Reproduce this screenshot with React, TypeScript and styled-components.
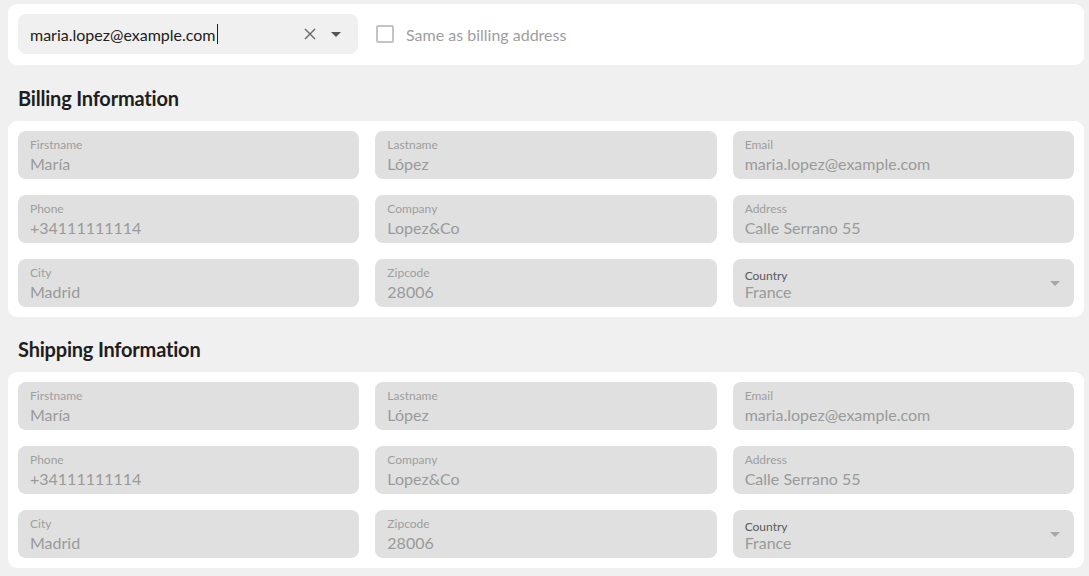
import styled, { createGlobalStyle } from 'styled-components';

const GlobalStyle = createGlobalStyle`
    body {
        margin: 0;
        background: #f0f0f0;
        font-family: Lato, "Open Sans", sans-serif;
    }
`;

const Page = styled.div`
    padding: 4px 5px 8px 8px;
`;

const Card = styled.div<{ $compact?: boolean }>`
    background: #fff;
    border-radius: 9px;
    padding: ${(p) => (p.$compact ? '10px 10px 11px' : '10px')};
`;

const TopRow = styled.div`
    display: flex;
    align-items: center;
    gap: 18px;
`;

const Combo = styled.div`
    width: 340px;
    height: 40px;
    box-sizing: border-box;
    background: #f0f0f0;
    border-radius: 8px;
    display: flex;
    align-items: center;
    padding: 0 14px 0 12px;
`;

const ComboText = styled.span`
    flex: 1;
    font-size: 16px;
    color: #212121;
    display: flex;
    align-items: center;
`;

const Caret = styled.span`
    display: inline-block;
    width: 1px;
    height: 20px;
    background: #212121;
    margin-left: 1px;
`;

const IconBtn = styled.span`
    display: flex;
    align-items: center;
    justify-content: center;
    width: 16px;
    height: 16px;
    margin-left: 10px;
`;

const CheckLabel = styled.label`
    display: flex;
    align-items: center;
    gap: 12px;
    font-size: 16px;
    color: #9e9e9e;
`;

const Box = styled.span`
    width: 18px;
    height: 18px;
    box-sizing: border-box;
    border: 2px solid #c4c4c4;
    border-radius: 2px;
`;

const Heading = styled.h2<{ $tight?: boolean }>`
    margin: ${(p) => (p.$tight ? '16px' : '17px')} 0 7px 10px;
    font-size: 20px;
    line-height: 32px;
    font-weight: 700;
    color: #1e1e1e;
    letter-spacing: -0.2px;
`;

const Grid = styled.div`
    display: grid;
    grid-template-columns: repeat(3, 1fr);
    gap: 16px;
`;

const Field = styled.div<{ $select?: boolean }>`
    position: relative;
    height: 48px;
    box-sizing: border-box;
    background: #e0e0e0;
    border-radius: 8px;
    padding: ${(p) => (p.$select ? '10px 12px 0' : '6px 12px 0')};
`;

const Label = styled.div<{ $dark?: boolean }>`
    font-size: 12px;
    line-height: ${(p) => (p.$dark ? '13px' : '16px')};
    color: ${(p) => (p.$dark ? '#5a5a5a' : '#9e9e9e')};
`;

const Value = styled.div<{ $select?: boolean }>`
    font-size: 16px;
    line-height: ${(p) => (p.$select ? '20px' : '22px')};
    color: #9a9a9a;
`;

const SelectArrow = styled.span`
    position: absolute;
    right: 14px;
    top: 22px;
    width: 0;
    height: 0;
    border-left: 5px solid transparent;
    border-right: 5px solid transparent;
    border-top: 5px solid #a6a6a6;
`;

const fields = [
    { label: 'Firstname', value: 'María' },
    { label: 'Lastname', value: 'López' },
    { label: 'Email', value: 'maria.lopez@example.com' },
    { label: 'Phone', value: '+34111111114' },
    { label: 'Company', value: 'Lopez&Co' },
    { label: 'Address', value: 'Calle Serrano 55' },
    { label: 'City', value: 'Madrid' },
    { label: 'Zipcode', value: '28006' },
];

const AddressCard = () => (
    <Card>
        <Grid>
            {fields.map((f) => (
                <Field key={f.label}>
                    <Label>{f.label}</Label>
                    <Value>{f.value}</Value>
                </Field>
            ))}
            <Field $select>
                <Label $dark>Country</Label>
                <Value $select>France</Value>
                <SelectArrow />
            </Field>
        </Grid>
    </Card>
);

const App = () => (
    <Page>
        <GlobalStyle />
        <Card $compact>
            <TopRow>
                <Combo>
                    <ComboText>
                        maria.lopez@example.com
                        <Caret />
                    </ComboText>
                    <IconBtn>
                        <svg width="12" height="12" viewBox="0 0 12 12">
                            <path d="M1 1L11 11M11 1L1 11" stroke="#666" strokeWidth="1.4" />
                        </svg>
                    </IconBtn>
                    <IconBtn>
                        <svg width="10" height="5" viewBox="0 0 10 5">
                            <path d="M0 0H10L5 5Z" fill="#555" />
                        </svg>
                    </IconBtn>
                </Combo>
                <CheckLabel>
                    <Box />
                    Same as billing address
                </CheckLabel>
            </TopRow>
        </Card>
        <Heading>Billing Information</Heading>
        <AddressCard />
        <Heading $tight>Shipping Information</Heading>
        <AddressCard />
    </Page>
);

export default App;
